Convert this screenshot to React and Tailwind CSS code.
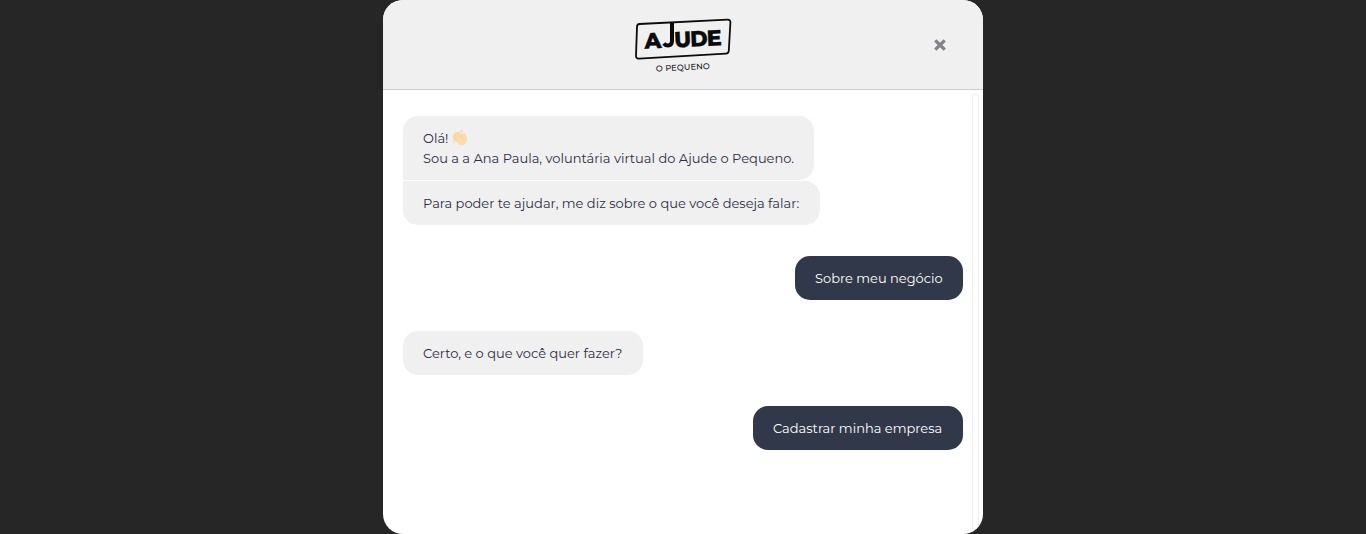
function Logo() {
  return (
    <svg width="120" height="70" viewBox="0 0 120 70" aria-label="Ajude o Pequeno">
      <path
        d="M16.5 14 L104.5 9.7 Q107.6 9.5 107.4 12.5 L105.8 40.7 Q105.6 43.5 102.8 43.7 L16 48.6 Q12.8 48.8 13 45.6 L14 16.7 Q14.1 14.2 16.5 14 Z"
        fill="none"
        stroke="#0b0b0b"
        strokeWidth="1.8"
      />
      <path d="M49 13 L49 31 Q48.8 35.6 45 35.6 Q42.4 35.6 40.8 33.6" fill="none" stroke="#0b0b0b" strokeWidth="4" />
      <g
        transform="rotate(-2.6 22 38.6)"
        fill="#0b0b0b"
        stroke="#0b0b0b"
        strokeWidth="0.3"
        fontFamily="Montserrat, Inter, sans-serif"
        fontWeight="800"
        fontSize="22"
      >
        <text x="21.8" y="38.8" textLength="17" lengthAdjust="spacingAndGlyphs">A</text>
        <text x="51.5" y="38.8" textLength="17" lengthAdjust="spacingAndGlyphs">U</text>
        <text x="67.6" y="38.8" textLength="17.5" lengthAdjust="spacingAndGlyphs">D</text>
        <text x="84" y="38.8" textLength="15" lengthAdjust="spacingAndGlyphs">E</text>
      </g>
      <text
        transform="rotate(-2.6 33 61)"
        x="33"
        y="61.4"
        textLength="54"
        fontFamily="Montserrat, Inter, sans-serif"
        fontWeight="500"
        fontSize="8.2"
        fill="#111111"
      >
        O PEQUENO
      </text>
    </svg>
  );
}

function WavingHand() {
  return (
    <svg className="ml-1 shrink-0" width="16" height="16" viewBox="0 0 16 16" aria-hidden="true">
      <path
        d="M0.9 4.6 Q1.6 3.2 2.8 3.8 L2.5 2.9 Q3.4 1.4 4.8 2.2 Q6 0.8 7.4 1.8 L10.6 4.2 L10.8 3.2 Q12 2.2 13 3.6 L14.8 7.6 Q15.6 11.6 12.8 14 Q9.6 16 6.4 14 L1.4 10 Q0.4 8.8 1.2 7.6 Q0.2 6.2 0.9 4.6 Z"
        fill="#fadbab"
      />
      <path d="M2.8 4.6 L7.2 9 M4.8 3 L9.2 7.4 M1.8 7.6 L6 11.2 M10.6 4.6 Q9 7.8 10.8 9.6" fill="none" stroke="#f3cd99" strokeWidth="0.6" />
      <path d="M8.2 1 Q9.8 1 10.4 2.4 M9.2 0.5 L10.8 1.2 M0.8 11.4 Q1.2 12.8 2.8 13.2" fill="none" stroke="#c3d3da" strokeWidth="0.8" />
    </svg>
  );
}

function Line({ children }) {
  return <span className="block h-5 whitespace-nowrap">{children}</span>;
}

export default function App() {
  return (
    <div className="flex h-[534px] justify-center bg-[#262626] font-['Montserrat','Inter',sans-serif] text-[13px] leading-5 text-[#2e2d44]">
      <main className="flex w-[600px] flex-col overflow-hidden rounded-[20px] bg-white">
        <header className="grid h-[90px] shrink-0 grid-cols-[1fr_120px_1fr] items-center border-b border-[#cdcbd5] bg-[#f0f0f0]">
          <span />
          <Logo />
          <button className="mr-[37px] justify-self-end" aria-label="Fechar">
            <svg className="mt-px" width="12" height="12" viewBox="0 0 12 12">
              <path d="M1.3 1.3 L10.7 10.7 M10.7 1.3 L1.3 10.7" stroke="#808489" strokeWidth="3.3" />
            </svg>
          </button>
        </header>
        <div className="flex min-h-0 flex-1">
          <section className="flex w-[580px] flex-col items-start pt-[26px] pl-5">
            <div className="h-16 w-[411px] rounded-[15px] rounded-bl-none bg-[#f0f0f0] px-5 py-3">
              <div className="flex h-5 items-center">
                <span>Olá!</span>
                <WavingHand />
              </div>
              <Line>Sou a a Ana Paula, voluntária virtual do Ajude o Pequeno.</Line>
            </div>
            <div className="mt-px h-11 w-[417px] rounded-[15px] rounded-tl-none bg-[#f0f0f0] px-5 py-3">
              <Line>Para poder te ajudar, me diz sobre o que você deseja falar:</Line>
            </div>
            <div className="mt-[31px] h-11 w-[168px] self-end rounded-[15px] bg-[#313849] px-5 py-3 text-white">
              <Line>Sobre meu negócio</Line>
            </div>
            <div className="mt-[31px] h-11 w-60 rounded-[15px] bg-[#f0f0f0] px-5 py-3">
              <Line>Certo, e o que você quer fazer?</Line>
            </div>
            <div className="mt-[31px] h-11 w-[210px] self-end rounded-[15px] bg-[#313849] px-5 py-3 text-white">
              <Line>Cadastrar minha empresa</Line>
            </div>
          </section>
          <div className="mt-1 ml-[9px] w-[7px] rounded-t-[3px] border border-b-0 border-[#eeeeee]" />
        </div>
      </main>
    </div>
  );
}
